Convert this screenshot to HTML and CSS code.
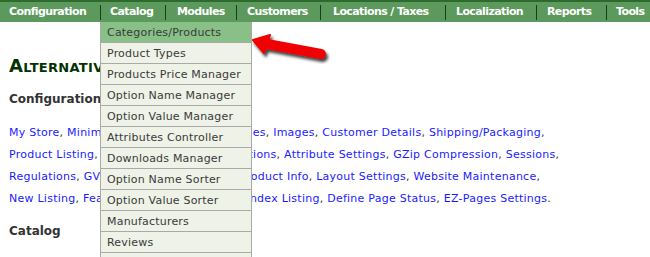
FILE: index.html
```html
<!DOCTYPE html>
<html>
<head>
<meta charset="utf-8">
<link rel="stylesheet" href="styles.css">
</head>
<body>
<ul class="nav">
  <li class="nav-item w-config">Configuration</li>
  <li class="nav-item w-catalog">Catalog
    <ul class="dropdown">
      <li class="dd-item active">Categories/Products</li>
      <li class="dd-item">Product Types</li>
      <li class="dd-item">Products Price Manager</li>
      <li class="dd-item">Option Name Manager</li>
      <li class="dd-item">Option Value Manager</li>
      <li class="dd-item">Attributes Controller</li>
      <li class="dd-item">Downloads Manager</li>
      <li class="dd-item">Option Name Sorter</li>
      <li class="dd-item">Option Value Sorter</li>
      <li class="dd-item">Manufacturers</li>
      <li class="dd-item">Reviews</li>
      <li class="dd-item">Specials</li>
    </ul>
  </li>
  <li class="nav-item w-modules">Modules</li>
  <li class="nav-item w-customers">Customers</li>
  <li class="nav-item w-locations">Locations / Taxes</li>
  <li class="nav-item w-localization">Localization</li>
  <li class="nav-item w-reports">Reports</li>
  <li class="nav-item w-tools">Tools</li>
</ul>

<svg class="arrow" width="90" height="45" viewBox="0 0 90 45">
  <defs>
    <filter id="sh" x="-20%" y="-30%" width="150%" height="180%">
      <feGaussianBlur in="SourceAlpha" stdDeviation="1.4"/>
      <feOffset dx="2" dy="2.5" result="b"/>
      <feFlood flood-color="#000" flood-opacity="0.75"/>
      <feComposite in2="b" operator="in" result="s"/>
      <feMerge><feMergeNode in="s"/><feMergeNode in="SourceGraphic"/></feMerge>
    </filter>
  </defs>
  <g filter="url(#sh)" fill="#f00000" stroke="#f00000">
    <line x1="17" y1="22" x2="71" y2="32" stroke-width="10" stroke-linecap="round"/>
    <polygon points="3,18 20,13 14,31" stroke-width="2" stroke-linejoin="round"/>
  </g>
</svg>

<main class="content">
  <h1 class="title">Alternative Menu</h1>
  <h2 class="section">Configuration</h2>
  <div class="links">
    <div class="row"><a>My Store</a>, <a>Minimum Values</a>, <a>Maximum Values</a>, <a>Images</a>, <a>Customer Details</a>, <a>Shipping/Packaging</a>,</div>
    <div class="row"><a>Product Listing</a>, <a>Stock</a>, <a>Logging</a>, <a>E-Mail Options</a>, <a>Attribute Settings</a>, <a>GZip Compression</a>, <a>Sessions</a>,</div>
    <div class="row"><a>Regulations</a>, <a>GV Coupons</a>, <a>Credit Cards</a>, <a>Product Info</a>, <a>Layout Settings</a>, <a>Website Maintenance</a>,</div>
    <div class="row"><a>New Listing</a>, <a>Featured Listing</a>, <a>All Listing</a>, <a>Index Listing</a>, <a>Define Page Status</a>, <a>EZ-Pages Settings</a>.</div>
  </div>
  <h2 class="section catalog">Catalog</h2>
</main>
</body>
</html>
```
FILE: styles.css
```css
* { box-sizing: border-box; }
html, body { margin: 0; padding: 0; background: #fff; }
body {
  font-family: Verdana, "DejaVu Sans", sans-serif;
  font-size: 11px;
  color: #333;
  width: 650px;
  height: 257px;
  overflow: hidden;
  position: relative;
}
.nav {
  list-style: none;
  margin: 0;
  padding: 0;
  display: flex;
  height: 22px;
  background: #5c995c;
  border-top: 2px solid #2e6a2e;
  position: relative;
  z-index: 2;
  white-space: nowrap;
}
.nav-item {
  position: relative;
  flex: none;
  color: #fff;
  font-weight: bold;
  font-size: 11px;
  line-height: 20px;
  padding-left: 11px;
  letter-spacing: -0.6px;
}
.w-config { width: 100px; padding-left: 9px; }
.w-catalog { width: 65px; padding-left: 10px; }
.w-modules { width: 71px; padding-left: 12px; }
.w-customers { width: 84px; }
.w-locations { width: 125px; padding-left: 13px; }
.w-localization { width: 91px; }
.w-reports { width: 70px; }
.w-tools { width: 44px; padding-left: 10px; }
.nav-item + .nav-item::before {
  content: "";
  position: absolute;
  left: 0;
  top: 3px;
  height: 15px;
  border-left: 1px solid #173f17;
}
.dropdown {
  list-style: none;
  margin: 0;
  padding: 0;
  position: absolute;
  left: 0;
  top: 20px;
  width: 152px;
  background: #eef2e7;
  border-left: 1px solid #a9a9a9;
  border-right: 1px solid #a9a9a9;
  letter-spacing: 0.2px;
}
.dd-item {
  height: 21px;
  line-height: 18px;
  padding: 2px 0 0 6px;
  border-bottom: 1px solid #a9a9a9;
  color: #3a3a3a;
  font-weight: normal;
  font-size: 11px;
}
.dd-item.active { background: #88c088; }
.arrow {
  position: absolute;
  left: 250px;
  top: 22px;
  z-index: 3;
}
.content {
  padding: 0 9px;
  position: relative;
  z-index: 1;
}
.title {
  margin: 0;
  padding-top: 32px;
  font-size: 18px;
  line-height: 24px;
  font-variant: small-caps;
  color: #003300;
  font-weight: bold;
  letter-spacing: 0.3px;
}
.section {
  margin: 0;
  font-size: 12px;
  font-weight: bold;
  color: #333;
  line-height: 16px;
  padding-top: 13px;
}
.links {
  padding-top: 15px;
  line-height: 22px;
  white-space: nowrap;
  letter-spacing: 0.25px;
}
.links a { color: #1b1bff; text-decoration: none; }
.section.catalog { padding-top: 13px; }
```
